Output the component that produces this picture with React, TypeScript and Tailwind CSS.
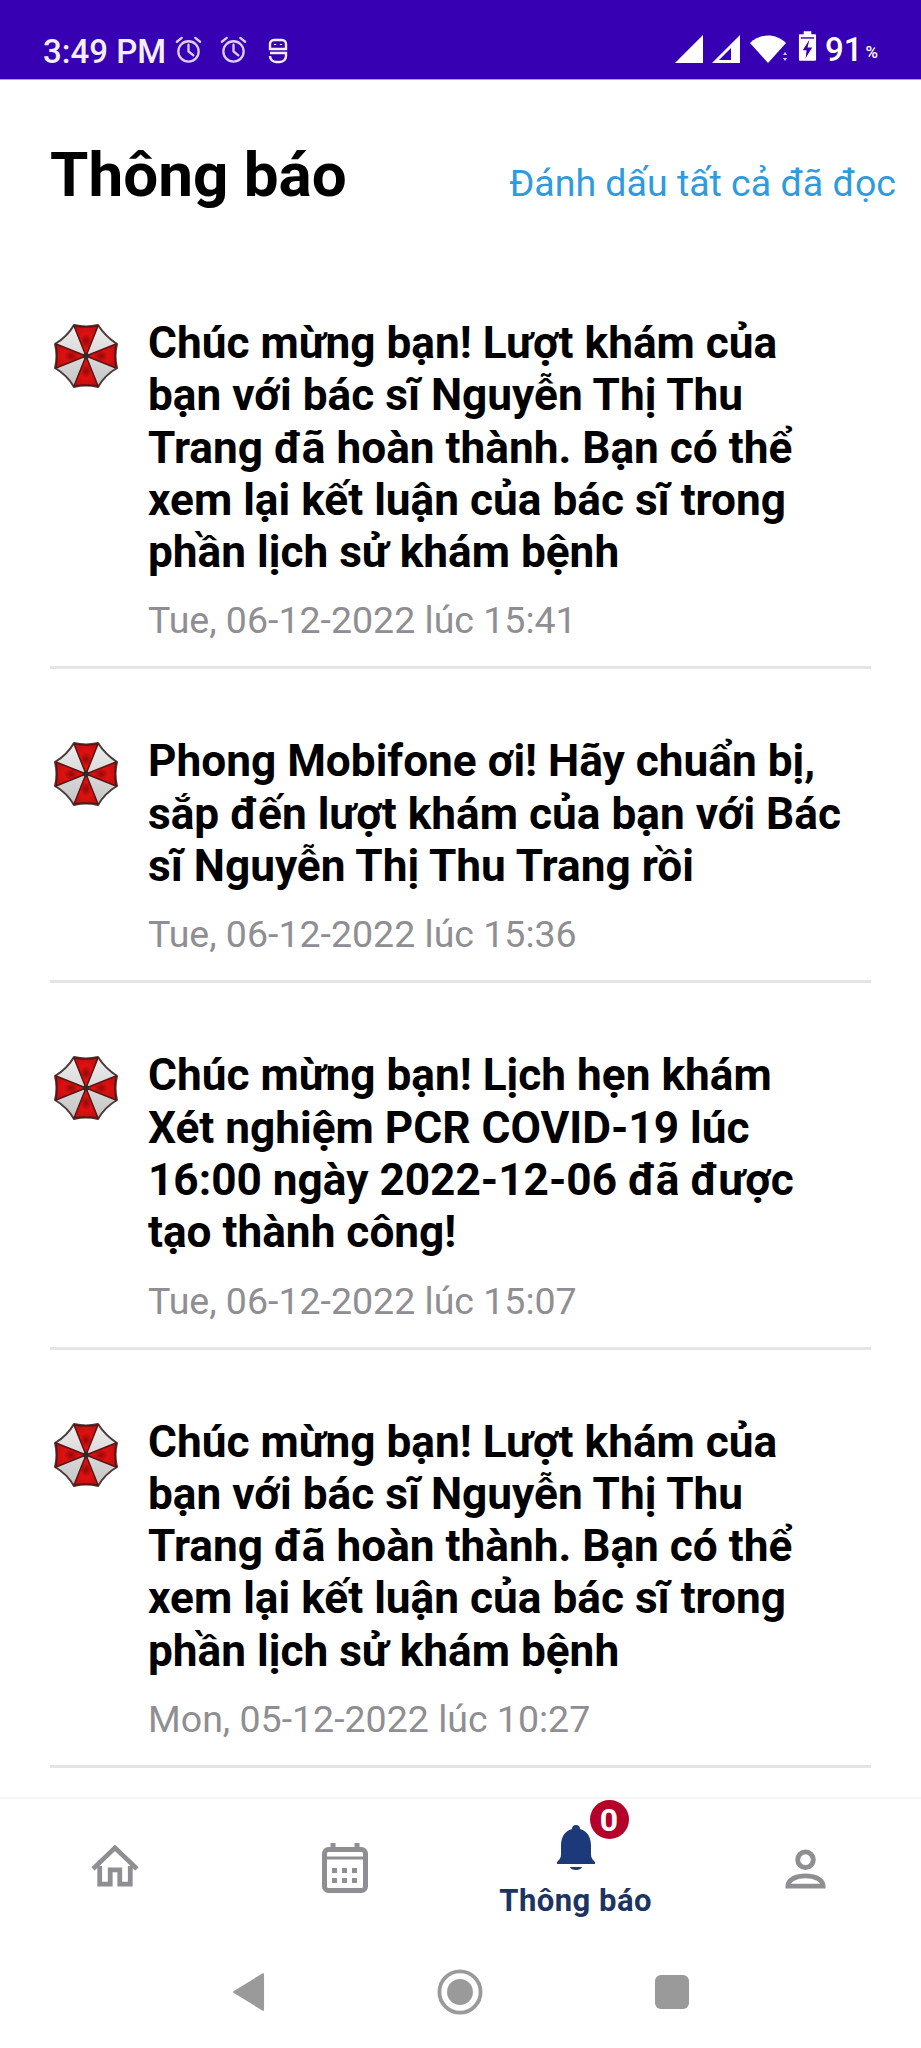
import React from "react";

const font = { fontFamily: "Roboto, sans-serif" };

// Logo du parapluie
const UmbrellaLogo = () => (
  <svg width="66" height="66" viewBox="0 0 66 66" className="shrink-0">
    <defs>
      <radialGradient id="redWedge" cx="50%" cy="50%" r="55%">
        <stop offset="0%" stopColor="#8f0a0a" />
        <stop offset="45%" stopColor="#e01010" />
        <stop offset="100%" stopColor="#c40f0f" />
      </radialGradient>
      <linearGradient id="greyWedge" x1="0" y1="0" x2="0" y2="1">
        <stop offset="0%" stopColor="#eeeeee" />
        <stop offset="100%" stopColor="#c4c4c4" />
      </linearGradient>
    </defs>
    <path
      d="M21 2Q33 5 45 2Q52 13 64 21Q61 33 64 45Q52 52 45 64Q33 61 21 64Q14 52 2 45Q5 33 2 21Q14 14 21 2z"
      fill="url(#greyWedge)"
      stroke="#4a3a3a"
      strokeWidth="2"
      strokeLinejoin="round"
    />
    <path d="M33 33L21 3Q33 5 45 3z" fill="url(#redWedge)" stroke="#5a1414" strokeWidth="1.5" />
    <path d="M33 33L3 21Q5 33 3 45z" fill="url(#redWedge)" stroke="#5a1414" strokeWidth="1.5" />
    <path d="M33 33L63 21Q61 33 63 45z" fill="url(#redWedge)" stroke="#5a1414" strokeWidth="1.5" />
    <path d="M33 33L21 63Q33 61 45 63z" fill="url(#redWedge)" stroke="#5a1414" strokeWidth="1.5" />
    <circle cx="33" cy="33" r="3" fill="#2b2b2b" />
  </svg>
);

const AlarmIcon = () => (
  <svg width="29" height="29" viewBox="0 0 30 30" fill="none" stroke="#dccdf5" strokeWidth="2.4">
    <circle cx="15" cy="17" r="10.5" />
    <path d="M15 10v7l5 4M3 7l5-4M27 7l-5-4" strokeLinecap="round" />
  </svg>
);

const StatusBar = () => (
  <div className="h-[80px] shrink-0 bg-[#3700b3] border-b-[1px] border-[#b794e8] flex items-end pb-[7px] pl-[43px] pr-[43px] justify-between text-white" style={font}>
    <div className="flex items-center">
      <span className="text-[33px] leading-[40px] font-medium text-[#f3eefc]">3:49 PM</span>
      <div className="ml-[8px] mb-[5px]"><AlarmIcon /></div>
      <div className="ml-[16px] mb-[5px]"><AlarmIcon /></div>
      <svg width="20" height="26" viewBox="0 0 20 26" fill="none" stroke="#f3eefc" strokeWidth="2.4" className="ml-[20px] mb-[3px]">
        <path d="M2 11V6a4 4 0 0 1 4-4h8a4 4 0 0 1 4 4v5zM2 15h16v3a6 6 0 0 1-6 6H8a6 6 0 0 1-6-6" />
        <path d="M7 6v1M13 6v1" />
      </svg>
    </div>
    <div className="flex items-center">
      <svg width="28" height="28" viewBox="0 0 28 28"><polygon points="0,28 28,0 28,28" fill="#fff" /></svg>
      <svg width="28" height="28" viewBox="0 0 28 28" className="ml-[9px]">
        <path d="M0 28L28 0v28zM19 13L7 25h12z" fill="#fff" fillRule="evenodd" />
      </svg>
      <svg width="38" height="32" viewBox="0 0 38 32" className="ml-[10px]">
        <path d="M0 10C10 0 26 0 36 10L18 30z" fill="#fff" />
        <path d="M33 22l2-3 2 3zM33 25l2 3 2-3z" fill="#d8c9f2" />
      </svg>
      <svg width="19" height="31" viewBox="0 0 20 32" className="ml-[10px] mb-[4px]">
        <path d="M6 0h8v3h4a1 1 0 0 1 1 1v26a1 1 0 0 1-1 1H2a1 1 0 0 1-1-1V4a1 1 0 0 1 1-1h4z" fill="#fff" />
        <path d="M3 7h14" stroke="#3700b3" strokeWidth="1.5" />
        <path d="M12 9l-7 11h4l-1 8 7-11h-5z" fill="#3700b3" />
      </svg>
      <span className="ml-[8px] mt-[3px] text-[33px] leading-[40px] font-medium">91</span>
      <span className="ml-[3px] text-[17px] leading-[40px] font-medium mt-[7px]">%</span>
    </div>
  </div>
);

interface Notif {
  lines: string[];
  time: string;
}

const notifs: Notif[] = [
  {
    lines: ["Chúc mừng bạn! Lượt khám của", "bạn với bác sĩ Nguyễn Thị Thu", "Trang đã hoàn thành. Bạn có thể", "xem lại kết luận của bác sĩ trong", "phần lịch sử khám bệnh"],
    time: "Tue, 06-12-2022 lúc 15:41",
  },
  {
    lines: ["Phong Mobifone ơi! Hãy chuẩn bị,", "sắp đến lượt khám của bạn với Bác", "sĩ Nguyễn Thị Thu Trang rồi"],
    time: "Tue, 06-12-2022 lúc 15:36",
  },
  {
    lines: ["Chúc mừng bạn! Lịch hẹn khám", "Xét nghiệm PCR COVID-19 lúc", "16:00 ngày 2022-12-06 đã được", "tạo thành công!"],
    time: "Tue, 06-12-2022 lúc 15:07",
  },
  {
    lines: ["Chúc mừng bạn! Lượt khám của", "bạn với bác sĩ Nguyễn Thị Thu", "Trang đã hoàn thành. Bạn có thể", "xem lại kết luận của bác sĩ trong", "phần lịch sử khám bệnh"],
    time: "Mon, 05-12-2022 lúc 10:27",
  },
];

const NotifRow: React.FC<{ item: Notif }> = ({ item }) => (
  <div className="ml-[50px] w-[821px] border-b-[3px] border-[#e4e4e4] flex pt-[66px] pb-[20px]">
    <div className="ml-[3px] mt-[6px]"><UmbrellaLogo /></div>
    <div className="ml-[29px]">
      {item.lines.map((l) => (
        <div key={l} className="text-[44.2px] leading-[52.3px] font-bold text-black whitespace-nowrap">{l}</div>
      ))}
      <div className="mt-[16px] text-[37.5px] leading-[52px] text-[#8e8e93] whitespace-nowrap">{item.time}</div>
    </div>
  </div>
);

const BottomNav = () => (
  <div className="shrink-0 h-[251px] bg-white border-t-2 border-[#f5f5f5] relative">
    <div className="flex h-[161px]">
      <div className="flex-1 flex justify-center pt-[46px]">
        <svg width="48" height="42" viewBox="0 0 48 44" fill="none" stroke="#8e8e93" strokeWidth="5">
          <path d="M1 25L24 3l23 22M8 22v19h11V26h10v15h11V22" />
        </svg>
      </div>
      <div className="flex-1 flex justify-center pt-[44px]">
        <svg width="46" height="50" viewBox="0 0 46 50" fill="none">
          <rect x="2.5" y="6.5" width="41" height="41" rx="4" stroke="#8e8e93" strokeWidth="5" />
          <path d="M3 15h40" stroke="#8e8e93" strokeWidth="3" />
          <path d="M11 0v6M35 0v6" stroke="#8e8e93" strokeWidth="5" />
          <path d="M10 25h5v5h-5zM20 25h5v5h-5zM30 25h5v5h-5zM10 35h5v5h-5zM20 35h5v5h-5zM30 35h5v5h-5z" fill="#8e8e93" />
        </svg>
      </div>
      <div className="flex-1 flex flex-col items-center pt-[26px] relative">
        <svg width="38" height="48" viewBox="0 0 38 48" fill="#1c3a7a">
          <path d="M19 0a4 4 0 0 1 4 4c8 2 11 9 11 17v9c0 3 2 5 4 7v2H0v-2c2-2 4-4 4-7v-9C4 13 7 6 15 4a4 4 0 0 1 4-4zM13 42h12c-1 4-11 4-12 0z" />
        </svg>
        <span className="mt-[10px] text-[31px] leading-[36px] font-bold text-[#1c3461] tracking-[0.5px]" style={font}>Thông báo</span>
        <div className="absolute left-[129px] top-[1px] w-[39px] h-[39px] rounded-full bg-[#b5002a] flex items-center justify-center text-white text-[32px] font-bold" style={font}>0</div>
      </div>
      <div className="flex-1 flex justify-center pt-[50px]">
        <svg width="41" height="41" viewBox="0 0 42 42" fill="none" stroke="#8e8e93" strokeWidth="5">
          <circle cx="21" cy="11" r="8" />
          <path d="M3 38c0-14 36-14 36 0z" />
        </svg>
      </div>
    </div>
    <div className="flex justify-center items-center gap-[172px] h-[50px] pt-[13px]">
      <svg width="32" height="40" viewBox="0 0 34 40"><path d="M32 1v38L1 20z" fill="#9a9a9a" stroke="#9a9a9a" strokeWidth="2" strokeLinejoin="round" /></svg>
      <svg width="46" height="46" viewBox="0 0 48 48" fill="none">
        <circle cx="24" cy="24" r="21.5" stroke="#9a9a9a" strokeWidth="4" />
        <circle cx="24" cy="24" r="13.5" fill="#9a9a9a" />
      </svg>
      <div className="w-[34px] h-[34px] rounded-[6px] bg-[#9a9a9a]" />
    </div>
  </div>
);

export default function App() {
  return (
    <div className="w-[921px] h-[2048px] bg-white flex flex-col overflow-hidden" style={font}>
      <StatusBar />
      <div className="flex-1 min-h-0 overflow-hidden">
        <div className="flex items-center justify-between pl-[50px] pr-[25px] pt-[54px] pb-[35px]">
          <h1 className="text-[62px] leading-[82px] font-bold text-black">Thông báo</h1>
          <span className="text-[37.5px] leading-[44px] text-[#2e9bdf] mt-[16px]">Đánh dấu tất cả đã đọc</span>
        </div>
        {notifs.map((n, i) => (
          <NotifRow key={i} item={n} />
        ))}
      </div>
      <BottomNav />
    </div>
  );
}
